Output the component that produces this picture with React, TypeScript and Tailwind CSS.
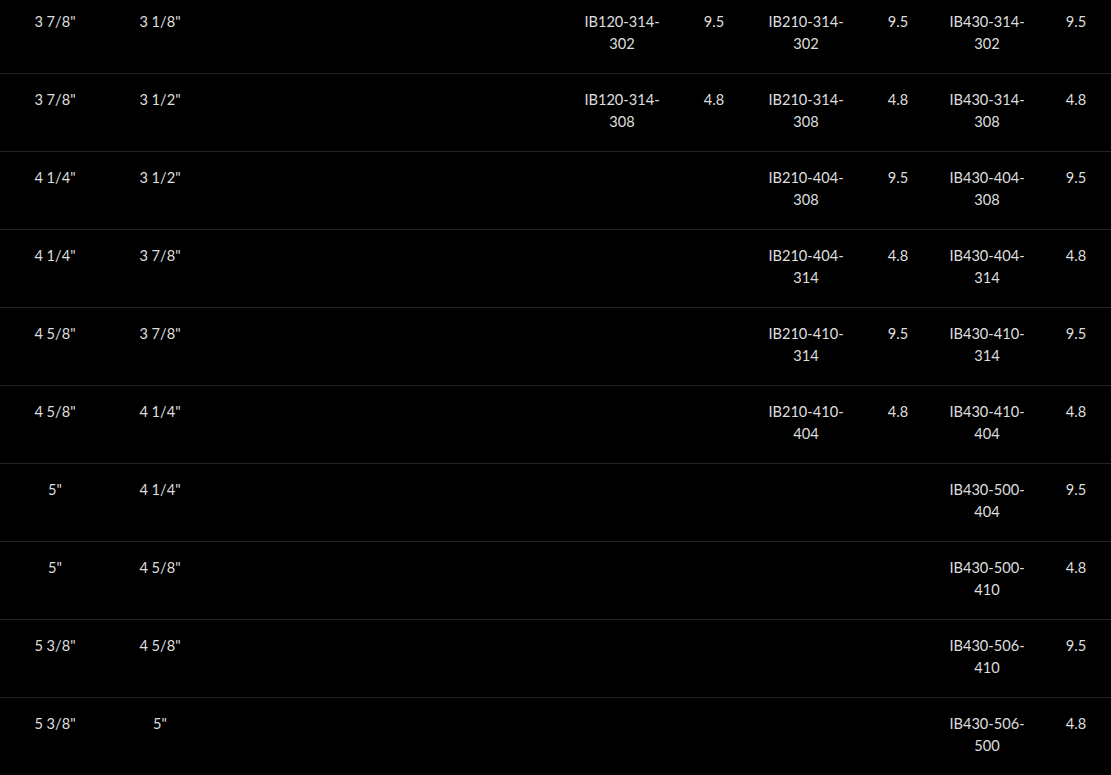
const rows = [
  { od: '3 7/8"', id: '3 1/8"', a: ['IB120-314-302', '9.5'], b: ['IB210-314-302', '9.5'], c: ['IB430-314-302', '9.5'] },
  { od: '3 7/8"', id: '3 1/2"', a: ['IB120-314-308', '4.8'], b: ['IB210-314-308', '4.8'], c: ['IB430-314-308', '4.8'] },
  { od: '4 1/4"', id: '3 1/2"', b: ['IB210-404-308', '9.5'], c: ['IB430-404-308', '9.5'] },
  { od: '4 1/4"', id: '3 7/8"', b: ['IB210-404-314', '4.8'], c: ['IB430-404-314', '4.8'] },
  { od: '4 5/8"', id: '3 7/8"', b: ['IB210-410-314', '9.5'], c: ['IB430-410-314', '9.5'] },
  { od: '4 5/8"', id: '4 1/4"', b: ['IB210-410-404', '4.8'], c: ['IB430-410-404', '4.8'] },
  { od: '5"', id: '4 1/4"', c: ['IB430-500-404', '9.5'] },
  { od: '5"', id: '4 5/8"', c: ['IB430-500-410', '4.8'] },
  { od: '5 3/8"', id: '4 5/8"', c: ['IB430-506-410', '9.5'] },
  { od: '5 3/8"', id: '5"', c: ['IB430-506-500', '4.8'] },
] as { od: string; id: string; a?: string[]; b?: string[]; c?: string[] }[];

function PartNo({ value }: { value?: string }) {
  if (!value) return <div />;
  // part numbers wrap after the second dash
  const cut = value.lastIndexOf('-') + 1;
  return (
    <div className="text-center">
      {value.slice(0, cut)}
      <br />
      {value.slice(cut)}
    </div>
  );
}

export default function App() {
  return (
    <div className="h-[775px] w-[1111px] overflow-hidden bg-black">
      <div
        className="-mt-[4px] w-[1122px] text-[14.6px] leading-[22px] text-[#dedede]"
        style={{ fontFamily: 'Lato, "Liberation Sans", sans-serif' }}
      >
        {rows.map((row, i) => (
          <div
            key={i}
            className={`grid h-[78px] grid-cols-[110px_100px_366px_92px_92px_92px_92px_86px_92px] pt-[15px] ${
              i < rows.length - 1 ? 'border-b border-[#232323]' : ''
            }`}
          >
            <div className="text-center">{row.od}</div>
            <div className="text-center">{row.id}</div>
            <div />
            <PartNo value={row.a?.[0]} />
            <div className="text-center">{row.a?.[1]}</div>
            <PartNo value={row.b?.[0]} />
            <div className="text-center">{row.b?.[1]}</div>
            <PartNo value={row.c?.[0]} />
            <div className="text-center">{row.c?.[1]}</div>
          </div>
        ))}
      </div>
    </div>
  );
}
